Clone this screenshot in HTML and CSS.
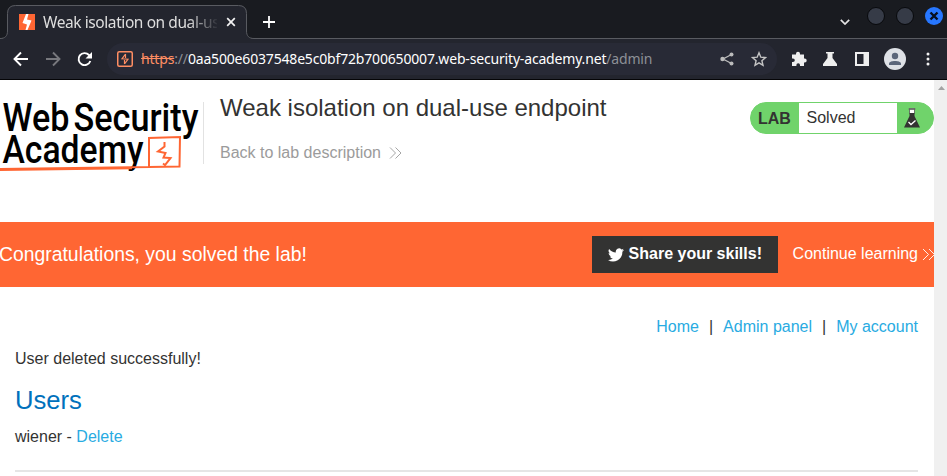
FILE: index.html
```html
<!DOCTYPE html>
<html lang="en">
<head>
<meta charset="utf-8">
<title>Weak isolation on dual-use endpoint</title>
<link rel="stylesheet" href="styles.css">
</head>
<body>
<div class="tabstrip">
  <svg class="tab-shape" width="256" height="39" viewBox="0 0 256 39"><path d="M0 38.5C5 38.5 7.500 36 7.500 31V13.500Q7.500 5.500 15.500 5.500H238.500Q246.500 5.500 246.500 13.500V31C246.500 36 249 38.500 254 38.500H256V39H0Z" fill="#23252e"/><path d="M0 38.500C5 38.500 7.500 36 7.500 31V13.500Q7.500 5.500 15.500 5.500H238.500Q246.500 5.500 246.500 13.500V31C246.500 36 249 38.500 254 38.500H256" fill="none" stroke="#595b61"/></svg>
  <div class="tab">
    <svg class="favicon" width="16" height="16" viewBox="0 0 16 16"><path fill="#ff6633" d="M0 0h16v16H0z"/><path fill="#fff" d="M7 0h2.500L8 5.500l4.500 1L8.500 16H6.500L8 10.500 3.500 9z"/></svg>
    <span class="tab-title">Weak isolation on dual-use</span>
    <svg width="10" height="10" viewBox="0 0 10 10"><path d="M1.200 1.200l7.600 7.600M8.800 1.200L1.200 8.800" stroke="#f3f3f3" stroke-width="1.700"/></svg>
  </div>
  <svg class="newtab" width="12" height="12" viewBox="0 0 12 12"><path d="M6 0v12M0 6h12" stroke="#fff" stroke-width="1.800"/></svg>
  <svg class="chev" width="10" height="6" viewBox="0 0 10 6"><path d="M.8.800L5 5 9.200.800" fill="none" stroke="#e4e4e4" stroke-width="1.700"/></svg>
  <div class="winbtns">
    <i></i><i></i>
    <svg width="18" height="18" viewBox="0 0 18 18"><circle cx="9" cy="9" r="9" fill="#2777ff"/><path d="M5.500 5.500l7 7M12.500 5.500l-7 7" stroke="#071020" stroke-width="2.400"/></svg>
  </div>
</div>
<div class="toolbar">
  <svg class="nav" width="96" height="16" viewBox="0 0 96 16"><g fill="none" stroke-width="1.900"><path d="M15 8H2M8 1.500L1.500 8 8 14.500" stroke="#fff"/><path d="M33 8h13M40 1.500L46.500 8 40 14.500" stroke="#77787d"/><path d="M77.300 10A6 6 0 1 1 76 4L78 6" stroke="#fff"/></g><path d="M79 1v6.500h-6.500z" fill="#fff"/></svg>
  <div class="address">
    <svg class="site" width="16" height="16" viewBox="0 0 16 16"><rect x=".75" y=".75" width="14.500" height="14.500" rx="1.500" fill="none" stroke="#ff8e63" stroke-width="1.500"/><path d="M8.500 3L5 7.800l6 .4L7.500 13M8.500 3v4M7.500 9v4" fill="none" stroke="#ff8e63" stroke-width="1.200"/></svg>
    <span class="url"><s>https</s><span class="dim">://</span>0aa500e6037548e5c0bf72b700650007.web-security-academy.net<span class="dim">/admin</span></span>
    <svg class="addr-icons" width="48" height="16" viewBox="0 0 48 16"><g fill="#bbb" stroke="#bbb"><path d="M12.500 3.500L4 8l8.500 4.500" fill="none" stroke-width="1.300"/><circle cx="12.500" cy="3.500" r="2" stroke="none"/><circle cx="3.500" cy="8" r="2.200" stroke="none"/><circle cx="12.500" cy="12.500" r="2" stroke="none"/></g><path d="M40 1.800l1.800 4.400 4.700.4-3.600 3.100 1.100 4.600-4-2.500-4 2.500 1.100-4.600-3.600-3.100 4.700-.4z" fill="none" stroke="#c4c4c4" stroke-width="1.400"/></svg>
  </div>
  <svg class="ext" width="80" height="16" viewBox="0 0 80 16"><g fill="#eee"><path d="M1 3.500h4V2.800a2 2 0 0 1 4 0v.7h4v4h.7a2 2 0 0 1 0 4H13V15H9v-1a1.800 1.800 0 0 0-3.600 0v1H1v-4h1a1.800 1.800 0 0 0 0-3.600H1z"/><path d="M35 1h8v1.500h-1.500V7l4.500 6v2H32v-2l4.500-6V2.500H35z"/><path d="M64 1h14v14H64zM66 3v10h6.500V3z" fill-rule="evenodd"/></g></svg>
  <svg class="avatar" width="22" height="22" viewBox="0 0 22 22"><circle cx="11" cy="11" r="11" fill="#dee1e6"/><circle cx="11" cy="8" r="3.200" fill="#5b667a"/><path d="M5 17v-1.500C5 12 17 12 17 15.500V17z" fill="#5b667a"/></svg>
  <svg class="dots" width="4" height="14" viewBox="0 0 4 14"><g fill="#f2f2f2"><circle cx="2" cy="2" r="1.500"/><circle cx="2" cy="7" r="1.500"/><circle cx="2" cy="12" r="1.500"/></g></svg>
</div>
<div class="viewport">
  <main class="page">
    <header class="lab-header">
      <svg class="logo" width="204" height="96" viewBox="0 0 204 96">
        <g class="logo-text"><text x="2.500" y="41" textLength="67" lengthAdjust="spacingAndGlyphs">Web</text><text x="73.500" y="41" textLength="125" lengthAdjust="spacingAndGlyphs">Security</text><text x="2.500" y="73.300" textLength="141" lengthAdjust="spacingAndGlyphs">Academy</text></g>
        <path d="M0 79l149-2V48l31-1-.5 29.500-30.500.5M0 80l132-1.800" fill="none" stroke="#ff6633" stroke-width="2"/>
        <path d="M164.500 52v4.500L158 61.500l7.500 1.500L163.500 67.500l7 .5-5.500 7-2-1.500" fill="none" stroke="#ff6633" stroke-width="2"/>
      </svg>
      <div class="divider"></div>
      <div class="title-box">
        <h2>Weak isolation on dual-use endpoint</h2>
        <a class="back"><span>Back to lab description</span><svg width="13" height="12" viewBox="0 0 13 12"><path d="M1 .5L6.500 6 1 11.500M6.500.5L12 6l-5.500 5.500" fill="none" stroke="#9b9b9b" stroke-width=".9"/></svg></a>
      </div>
      <div class="status"><b>LAB</b><span>Solved</span><svg width="16" height="20" viewBox="0 0 16 20"><path d="M5 .5h6v1H5zM5.500 1.500v4h5v-4" fill="#fff" stroke="#555" stroke-width=".8"/><path d="M5.500 5h5v3L16 19.500H0L5.500 8z" fill="#333332"/><path d="M4.500 14l2.500 2.500 4.500-4" fill="none" stroke="#fff" stroke-width="1.300"/></svg></div>
    </header>
    <section class="banner">
      <p>Congratulations, you solved the lab!</p>
      <button><svg width="16" height="14" viewBox="0 0 24 20"><path fill="#fff" d="M24 2.400a10 10 0 0 1-2.800.8A5 5 0 0 0 23.300.5a10 10 0 0 1-3.100 1.200A4.900 4.900 0 0 0 11.800 6.200 14 14 0 0 1 1.700 1a4.900 4.900 0 0 0 1.500 6.600A5 5 0 0 1 1 7c0 2.300 1.700 4.400 3.900 4.900a5 5 0 0 1-2.200.1 4.900 4.900 0 0 0 4.600 3.400A10 10 0 0 1 0 17.500 14 14 0 0 0 21.500 5a10 10 0 0 0 2.500-2.600z"/></svg><span>Share your skills!</span></button>
      <a class="continue"><span>Continue learning</span><svg width="13" height="13" viewBox="0 0 13 13"><path d="M1 1l5.500 5.500L1 12M7 1l5.500 5.500L7 12" fill="none" stroke="#fff" stroke-width=".9"/></svg></a>
    </section>
    <div class="content">
      <nav class="links"><a>Home</a><i>|</i><a>Admin panel</a><i>|</i><a>My account</a></nav>
      <p class="msg">User deleted successfully!</p>
      <h1>Users</h1>
      <p class="user">wiener - <a>Delete</a></p>
      <hr>
    </div>
  </main>
  <div class="scrollbar"><svg width="7" height="4" viewBox="0 0 7 4"><path d="M0 4L3.500 0 7 4z" fill="#a3a3a3"/></svg></div>
</div>
</body>
</html>
```
FILE: styles.css
```css
* { box-sizing: border-box; margin: 0; padding: 0; }
body { width: 947px; height: 476px; overflow: hidden; display: flex; flex-direction: column; background: #fff; font: 16px/20px "Liberation Sans", Arial, sans-serif; color: #333332; white-space: nowrap; }
svg { display: block; flex: none; }
.tabstrip { position: relative; height: 39px; flex: none; display: flex; background: #191b20; border-bottom: 1px solid #595b61; }
.tab-shape { position: absolute; left: 0; top: 0; }
.tab { position: relative; width: 247px; display: flex; align-items: center; padding: 6px 11px 0 19px; flex: none; }
.tab-title { margin: 0 9px 0 8px; width: 174px; overflow: hidden; font: 15.500px/20px "Noto Sans", sans-serif; letter-spacing: -.42px; color: #dedede; -webkit-mask-image: linear-gradient(90deg, #000 145px, transparent 176px); mask-image: linear-gradient(90deg, #000 145px, transparent 176px); }
.newtab { margin: 16px 0 0 16px; }
.chev { margin: 19px 17px 0 auto; }
.winbtns { display: flex; gap: 11px; padding: 7px 4px 0 0; }
.winbtns i { width: 18px; height: 18px; border-radius: 50%; border: 1px solid #08090c; background: #363b47; }
.toolbar { height: 41px; flex: none; display: flex; align-items: center; background: #23252e; border-bottom: 1px solid #050507; padding-right: 17px; }
.nav { margin-left: 13px; }
.address { display: flex; align-items: center; margin-left: -2px; width: 670px; height: 32px; border-radius: 16px; background: #282a36; padding: 0 10px; flex: none; }
.url { margin-left: 8px; width: 511px; font: 14px/20px "Noto Sans", sans-serif; letter-spacing: -.173px; color: #fff; }
.url s { color: #ff8e63; }
.url .dim { color: #8d9096; }
.addr-icons { margin-left: auto; }
.ext { margin-left: 14px; }
.avatar { margin-left: 13px; }
.dots { margin-left: auto; }
.viewport { flex: 1; display: flex; min-height: 0; }
.page { width: 934px; overflow: hidden; flex: none; }
.scrollbar { width: 13px; background: #f0f0f0; padding: 6px 0 0 4px; }
.lab-header { height: 142px; display: flex; align-items: flex-start; }
.logo { margin-top: 10px; margin-right: -1px; }
.logo-text { font: 500 38px Roboto, sans-serif; fill: #000; }
.divider { width: 1px; height: 62px; margin-top: 22px; background: #e2e2e2; }
.title-box { padding: 13px 0 0 16px; }
h2 { font-weight: 400; font-size: 24px; line-height: 30px; }
.back { display: flex; align-items: center; gap: 8px; margin-top: 20px; color: #9b9b9b; }
.status { margin: 22px 0 0 auto; width: 184px; height: 32px; border: 1px solid #70d36b; border-radius: 16px; background: #70d36b; display: flex; align-items: center; color: #333332; }
.status b { width: 48px; padding: 1px 0 0 7px; }
.status span { width: 98px; height: 30px; background: #fff; padding-left: 7.500px; line-height: 30px; }
.status svg { margin-left: 7px; }
.banner { height: 65px; background: #ff6633; display: flex; align-items: center; color: #fff; }
.banner p { font-size: 19.360px; margin-left: -1px; padding-bottom: 1px; }
.banner button { display: flex; align-items: center; gap: 5px; width: 186px; height: 37px; border: 0; margin: 0 15px 0 auto; padding-left: 16px; background: #333332; color: #fff; font: 700 16px/20px "Liberation Sans", sans-serif; }
.banner span { padding-bottom: 2px; }
.continue { display: flex; align-items: center; gap: 4px; margin-right: -1px; }
.content { padding: 30px 16px 0 15px; }
.content a { color: #29abe2; }
.links { display: flex; justify-content: flex-end; gap: 10px; }
.links i { font-style: normal; }
.msg { margin-top: 12px; }
h1 { margin-top: 16px; font-weight: 400; font-size: 25.600px; line-height: 30px; color: #0071bc; }
.user { margin-top: 12px; }
hr { border: 0; height: 2px; margin-top: 23px; background: #e5e5e5; }
```
